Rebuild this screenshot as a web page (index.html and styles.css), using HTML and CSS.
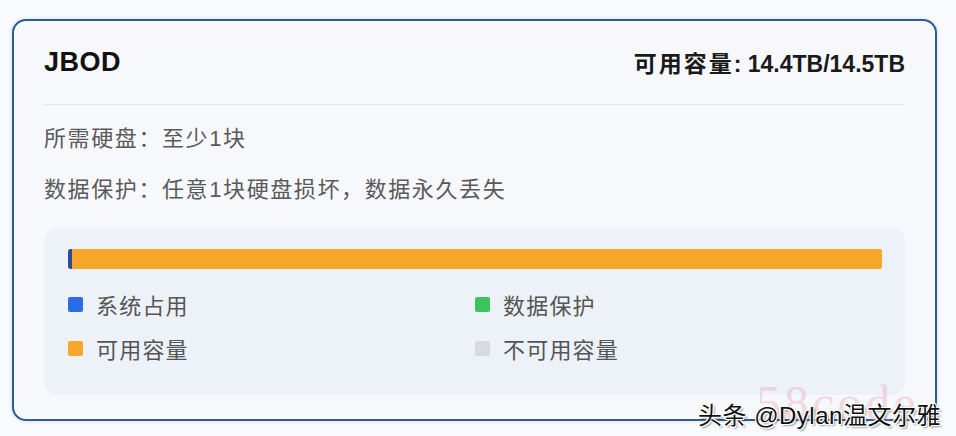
FILE: index.html
```html
<!DOCTYPE html>
<html lang="zh-CN">
<head>
<meta charset="utf-8">
<title>JBOD</title>
<link rel="stylesheet" href="styles.css">
</head>
<body>
<div class="card">
  <div class="header">
    <div class="title">JBOD</div>
    <div class="capacity"><span class="cap-label">可用容量</span>: 14.4TB/14.5TB</div>
  </div>
  <div class="divider"></div>
  <div class="info">所需硬盘：至少1块</div>
  <div class="info">数据保护：任意1块硬盘损坏，数据永久丢失</div>
  <div class="panel">
    <div class="bar">
      <div class="seg seg-sys" style="width:4px"></div>
      <div class="seg seg-free"></div>
    </div>
    <div class="legend">
      <div class="item"><span class="sw sw-blue"></span>系统占用</div>
      <div class="item"><span class="sw sw-green"></span>数据保护</div>
      <div class="item"><span class="sw sw-orange"></span>可用容量</div>
      <div class="item"><span class="sw sw-gray"></span>不可用容量</div>
    </div>
  </div>
</div>
<div class="wm-pink">58code</div>
<div class="watermark">头条 @Dylan温文尔雅</div>
</body>
</html>
```

FILE: styles.css
```css
html, body {
  margin: 0;
  padding: 0;
}
body {
  background: #f8fafd;
  width: 956px;
  height: 436px;
  overflow: hidden;
  position: relative;
  font-family: "Liberation Sans", "Noto Sans CJK SC", sans-serif;
}
.card {
  margin: 19px 0 0 12px;
  width: 925px;
  height: 402px;
  box-sizing: border-box;
  border: 2px solid #2f5b8f;
  border-radius: 14px;
  background: #f6f8fc;
  padding: 26px 30px 0 30px;
  box-shadow: 0 0 4px rgba(120, 180, 230, 0.35);
}
.header {
  display: flex;
  justify-content: space-between;
  align-items: center;
  height: 30px;
}
.title {
  font-size: 27px;
  font-weight: bold;
  color: #111;
  letter-spacing: 0.5px;
}
.capacity {
  font-size: 23px;
  font-weight: bold;
  color: #1a1a1a;
}
.cap-label {
  letter-spacing: 2px;
}
.divider {
  height: 1px;
  background: #e3e6eb;
  margin-top: 27px;
}
.info {
  font-size: 22px;
  line-height: 32px;
  letter-spacing: 1.6px;
  color: #5a5a5a;
  margin-top: 18px;
}
.info + .info {
  margin-top: 19px;
}
.panel {
  margin-top: 22px;
  background: #edf1f8;
  border-radius: 14px;
  padding: 21px 23px 32px 24px;
}
.bar {
  display: flex;
  height: 20px;
  border-radius: 3px;
  overflow: hidden;
  background: #f7a82a;
}
.seg-sys {
  background: #2b4c99;
}
.seg-free {
  flex: 1;
  background: #f7a82a;
}
.legend {
  display: grid;
  grid-template-columns: 1fr 1fr;
  row-gap: 14px;
  margin-top: 20px;
}
.item {
  display: flex;
  align-items: center;
  height: 30px;
  font-size: 22px;
  letter-spacing: 1.2px;
  color: #555;
}
.sw {
  width: 15px;
  height: 15px;
  border-radius: 2px;
  margin-right: 13px;
  flex: none;
}
.sw-blue { background: #2a6be6; }
.sw-green { background: #3dc35b; }
.sw-orange { background: #f7a82a; }
.sw-gray { background: #d9dadd; }
.wm-pink {
  position: absolute;
  left: 756px;
  top: 374px;
  font-family: "Liberation Serif", serif;
  font-size: 50px;
  color: rgba(235, 170, 185, 0.4);
  letter-spacing: 3px;
}
.watermark {
  position: absolute;
  left: 698px;
  top: 396px;
  font-size: 24px;
  letter-spacing: 0.5px;
  color: #111;
  text-shadow: 1px 1px 0 #fff, -1px -1px 0 #fff, 1px -1px 0 #fff, -1px 1px 0 #fff, 2px 2px 2px rgba(0,0,0,0.4);
}
```
